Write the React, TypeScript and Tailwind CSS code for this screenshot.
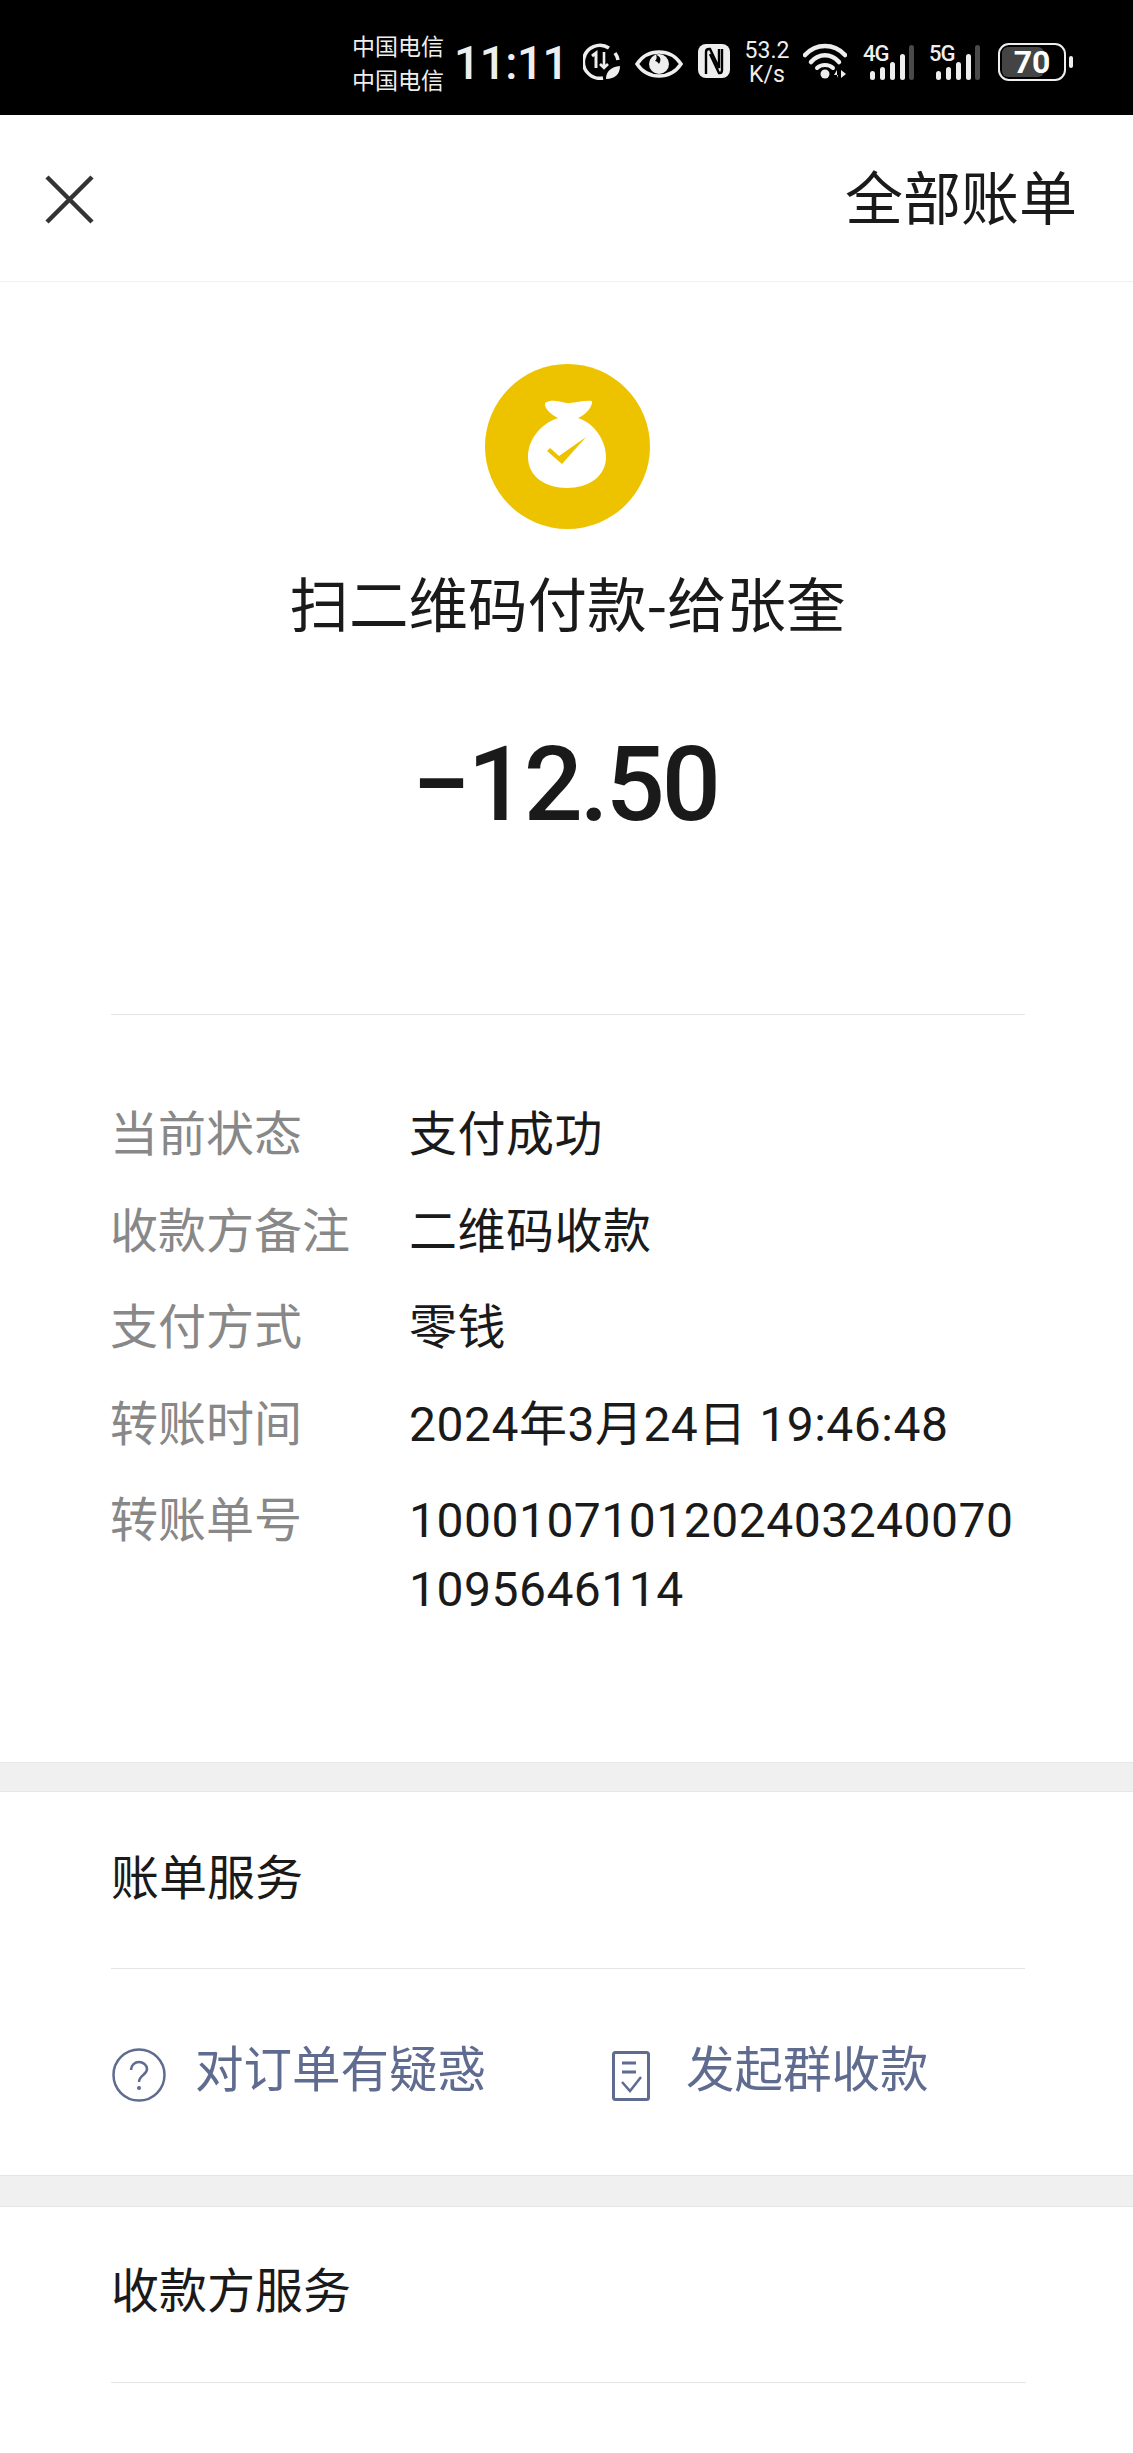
const cjk = "font-['Noto_Sans_CJK_SC',sans-serif]"

interface DetailRow {
  label: string;
  value: string;
}

const details: DetailRow[] = [
  { label: '当前状态', value: '支付成功' },
  { label: '收款方备注', value: '二维码收款' },
  { label: '支付方式', value: '零钱' },
  { label: '转账时间', value: '2024年3月24日 19:46:48' },
  { label: '转账单号', value: '10001071012024032400701095646114' },
]

function Signal({ label }: { label: string }) {
  return (
    <div className="relative flex">
      <svg width="52" height="37" viewBox="0 0 52 37">
        <rect x="7" y="27" width="5" height="9" rx="2.5" fill="#eee" />
        <rect x="17" y="23" width="5" height="13" rx="2.5" fill="#eee" />
        <rect x="27" y="18" width="5" height="18" rx="2.5" fill="#eee" />
        <rect x="37" y="10" width="5" height="26" rx="2.5" fill="#eee" />
        <rect x="46" y="1" width="5" height="35" rx="2.5" fill="#4a4a4a" />
      </svg>
      <span className="absolute left-0 top-0 font-['Roboto',sans-serif] text-[22px] font-medium leading-[20px] tracking-[-1px]">{label}</span>
    </div>
  )
}

function StatusBar() {
  return (
    <div className="flex h-[115px] items-start bg-black pl-[352px] pt-[33px] text-[#eeeeee]">
      <div className={`${cjk} -mt-[5px] w-[102px] text-[23px] leading-[34px]`}>
        <div>中国电信</div>
        <div>中国电信</div>
      </div>
      <div className="mt-[4px] w-[129px] font-['Roboto',sans-serif] text-[46px] font-medium leading-[52px] tracking-[-0.500px]">11:11</div>
      <svg className="mt-[10px]" width="37" height="37" viewBox="0 0 37 37">
        <path d="M26 5A16.500 16.500 0 1 0 20 35" fill="none" stroke="#eee" strokeWidth="3.500" />
        <path d="M32 10a16.500 16.500 0 0 1 3 7" fill="none" stroke="#eee" strokeWidth="3.500" />
        <path d="M9 13l4-3v15" fill="none" stroke="#eee" strokeWidth="3" />
        <path d="M21 9v16m-4-4l4 4 4-4" fill="none" stroke="#eee" strokeWidth="2.600" />
        <path d="M23 36c0-8 5-12 14-13 0 8-5 13-14 13z" fill="#eee" />
      </svg>
      <svg className="ml-[15px] mt-[17px]" width="48" height="28" viewBox="0 0 48 28">
        <path d="M2 14C8 5 16 2 24 2s16 3 22 12c-6 9-14 12-22 12S8 23 2 14z" fill="none" stroke="#eee" strokeWidth="3.500" />
        <circle cx="24" cy="14" r="10" fill="#eee" />
        <path d="M21 5c4 1 6 4 3 9-1-2-3-3-4-3 2-2 2-4 1-6z" fill="#000" />
      </svg>
      <svg className="ml-[15px] mt-[11px]" width="32" height="34" viewBox="0 0 32 34">
        <rect x="0" y="0" width="32" height="34" rx="8" fill="#eee" />
        <path d="M8 30V8q0-3 3-3h1l9 19V5" fill="none" stroke="#000" strokeWidth="2.400" />
        <path d="M12 10l9 19h1q2 0 2-3V5" fill="none" stroke="#000" strokeWidth="2.400" />
      </svg>
      <div className="ml-[15px] mt-[6px] flex w-[44px] flex-col items-center font-['Roboto',sans-serif] text-[23px] leading-[24px]">
        <div>53.2</div>
        <div>K/s</div>
      </div>
      <svg className="ml-[14px] mt-[10px]" width="44" height="36" viewBox="0 0 44 36">
        <path d="M2 12C13 0 31 0 42 12" fill="none" stroke="#eee" strokeWidth="4.500" strokeLinecap="round" />
        <path d="M8 19C16 10 28 10 36 19" fill="none" stroke="#eee" strokeWidth="4.500" strokeLinecap="round" />
        <path d="M14 25C18 21 26 21 30 25" fill="none" stroke="#eee" strokeWidth="4" strokeLinecap="round" />
        <circle cx="22" cy="31" r="4.500" fill="#eee" />
        <path d="M34 35v-8l-3 5h4z" fill="#eee" />
        <path d="M38 27v8l5-4z" fill="#eee" />
      </svg>
      <div className="ml-[16px] mt-[11px] flex"><Signal label="4G" /></div>
      <div className="ml-[14px] mt-[11px] flex"><Signal label="5G" /></div>
      <div className="ml-[17px] mt-[10px] flex items-center">
        <div className="relative flex h-[38px] w-[68px] rounded-[11px] border-[2.500px] border-[#eeeeee] p-[2px]">
          <div className="w-[70%] rounded-[6px] bg-[#444444]" />
          <div className="absolute inset-0 flex items-center justify-center font-['Roboto',sans-serif] text-[32px] font-bold leading-none text-white">70</div>
        </div>
        <div className="ml-[3px] h-[12px] w-[4px] rounded-full bg-[#eeeeee]" />
      </div>
    </div>
  )
}

function MoneyBag() {
  return (
    <svg width="165" height="165" viewBox="0 0 165 165">
      <circle cx="82.500" cy="82.500" r="82.500" fill="#edc300" />
      <path
        d="M60 39c8-5 16 0 24 0 8 0 15-3 23-2 1 6-7 14-14 17 16 5 28 22 28 39 0 20-18 31-39 31S43 113 43 93c0-17 12-33 30-39-6-3-14-9-13-15z"
        fill="#fff"
      />
      <path d="M62 87l3-3 9 8 27-19-24 27z" fill="#edc300" />
    </svg>
  )
}

export default function App() {
  return (
    <div className={`${cjk} h-[2453px] w-[1133px] overflow-hidden bg-white text-[#1a1a1a]`}>
      <StatusBar />
      <header className="flex h-[167px] items-center justify-between border-b border-[#f0f0f0] pl-[45px] pr-[56px]">
        <svg className="mt-[2px]" width="49" height="49" viewBox="0 0 49 49">
          <path d="M2 2l45 45M47 2L2 47" fill="none" stroke="#333" strokeWidth="4.500" />
        </svg>
        <span className="mb-[7px] text-[58px] leading-[80px]">全部账单</span>
      </header>

      <section className="flex h-[1480px] flex-col">
        <div className="mt-[82px] flex justify-center pl-[2px]"><MoneyBag /></div>
        <h1 className="mt-[32px] pl-[2px] text-center text-[59.500px] font-normal leading-[80px]">扫二维码付款-给张奎</h1>
        <div className="mt-[84px] pr-[3px] text-center font-['Roboto',sans-serif] text-[104px] font-medium leading-[120px] tracking-[-3px]">−12.50</div>
        <div className="ml-[111px] mr-[108px] mt-[169px] h-px bg-[#e5e5e5]" />
        <div className="flex flex-col gap-[27.500px] pl-[110px] pt-[85px] font-['Roboto','Noto_Sans_CJK_SC',sans-serif] text-[48px] leading-[69px]">
          {details.map((row) => (
            <div key={row.label} className="flex">
              <div className="w-[299px] shrink-0 text-[#888888]">{row.label}</div>
              <div className="w-[615px] break-all tracking-[0.500px] text-[#1a1a1a]">{row.value}</div>
            </div>
          ))}
        </div>
      </section>

      <div className="h-[30px] border-y border-[#e6e6e6] bg-[#f0f0f0]" />

      <section className="h-[383px] px-[111px] pt-[42px]">
        <div className="text-[48px] leading-[80px]">账单服务</div>
        <div className="mt-[54px] h-px w-[914px] bg-[#e5e5e5]" />
        <div className="mt-[67px] flex items-center pl-px text-[48.500px] leading-[60px] text-[#5f6b8f]">
          <svg className="mt-[7px]" width="54" height="54" viewBox="0 0 54 54">
            <circle cx="27" cy="27" r="25.500" fill="none" stroke="#5f6b8f" strokeWidth="2.500" />
            <path d="M19 22c0-5 4-8 8-8s8 3 8 7c0 6-8 6-8 13" fill="none" stroke="#5f6b8f" strokeWidth="2.500" />
            <circle cx="27" cy="40" r="2" fill="#5f6b8f" />
          </svg>
          <span className="mb-[10px] ml-[29px]">对订单有疑惑</span>
          <svg className="ml-[126px] mt-[9px]" width="38" height="50" viewBox="0 0 38 50">
            <rect x="1.500" y="1.500" width="35" height="47" rx="2" fill="none" stroke="#5f6b8f" strokeWidth="3" />
            <path d="M10 12h14M10 21h14" stroke="#5f6b8f" strokeWidth="3" />
            <path d="M10 31l8 9 11-14" fill="none" stroke="#5f6b8f" strokeWidth="2.500" />
          </svg>
          <span className="mb-[10px] ml-[36px]">发起群收款</span>
        </div>
      </section>

      <div className="h-[32px] border-y border-[#e6e6e6] bg-[#f0f0f0]" />

      <section className="px-[111px] pt-[40px]">
        <div className="text-[48px] leading-[80px]">收款方服务</div>
        <div className="mt-[55px] h-px w-[915px] bg-[#e5e5e5]" />
      </section>
    </div>
  )
}
